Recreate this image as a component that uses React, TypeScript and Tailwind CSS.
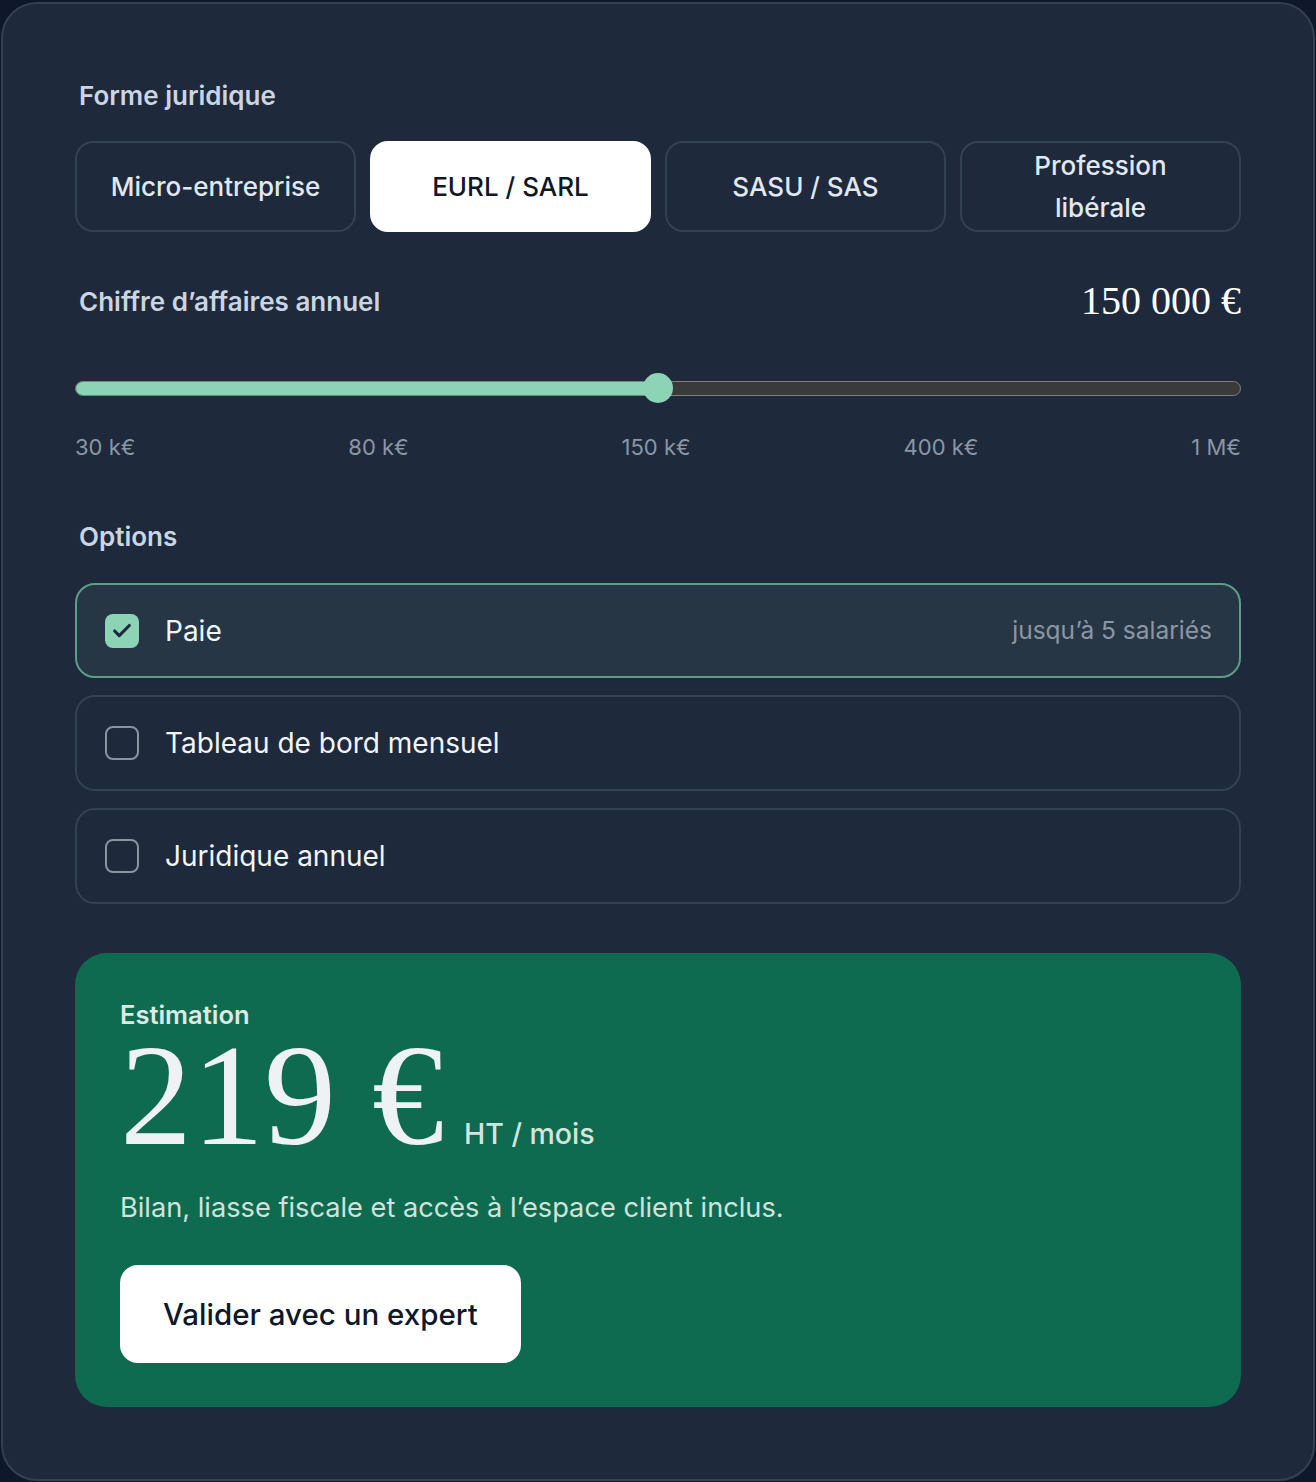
import { Check } from "lucide-react";

const formes = ["Micro-entreprise", "EURL / SARL", "SASU / SAS", "Profession libérale"];
const ticks = ["30 k€", "80 k€", "150 k€", "400 k€", "1 M€"];
const options = [
  { label: "Paie", hint: "jusqu’à 5 salariés", checked: true },
  { label: "Tableau de bord mensuel", hint: "", checked: false },
  { label: "Juridique annuel", hint: "", checked: false },
];

const sans = "font-['Inter','Liberation_Sans',sans-serif]";
const serif = "font-['Liberation_Serif','DejaVu_Serif',serif]";

export default function App() {
  const selected = 1;
  const pct = 50;

  return (
    <div className={`min-h-screen bg-[#0f172a] px-[1px] pt-[2px] ${sans}`}>
      <div className="rounded-[36px] border-2 border-[#334155] bg-[#1e293b] p-[72px]">
        {/* forme juridique */}
        <p className="pl-[4px] text-[26px] font-semibold leading-[40px] text-[#cbd5e1]">Forme juridique</p>
        <div className="mt-[25px] grid grid-cols-4 gap-[14px]">
          {formes.map((f, i) => (
            <button
              key={f}
              className={
                i === selected
                  ? "flex h-[91px] items-center justify-center rounded-[18px] border-2 border-white bg-white px-[28px] text-center text-[26px] font-medium leading-[42px] text-[#0f172a]"
                  : "flex h-[91px] items-center justify-center rounded-[18px] border-2 border-[#334155] px-[28px] text-center text-[26px] font-medium leading-[42px] text-[#e2e8f0]"
              }
            >
              {f}
            </button>
          ))}
        </div>

        {/* chiffre d'affaires */}
        <div className="mt-[45px] flex h-[48px] items-center justify-between pl-[4px]">
          <p className="text-[26px] font-semibold text-[#cbd5e1]">Chiffre d’affaires annuel</p>
          <p className={`${serif} text-[40px] text-white`}>150 000 €</p>
        </div>

        <div className="relative mt-[48px] flex h-[30px] items-center">
          <div className="relative h-[15px] w-full overflow-hidden rounded-full border-[1.5px] border-[#808080] bg-[#3a3a3a]">
            <div className="h-full bg-[#8dd3b5]" style={{ width: `${pct}%` }} />
          </div>
          <div
            className="absolute top-0 h-[30px] w-[30px] -translate-x-1/2 rounded-full bg-[#8dd3b5]"
            style={{ left: `${pct}%` }}
          />
        </div>

        <div className="mt-[29px] flex justify-between text-[22px] leading-[30px] text-[#8b96a5]">
          {ticks.map((t) => (
            <span key={t}>{t}</span>
          ))}
        </div>

        {/* options */}
        <p className="mt-[57px] pl-[4px] text-[26px] font-semibold leading-[36px] text-[#cbd5e1]">Options</p>
        <div className="mt-[28px] flex flex-col gap-[17px]">
          {options.map((o) => (
            <div
              key={o.label}
              className={
                o.checked
                  ? "flex h-[95px] items-center rounded-[20px] border-2 border-[#5b9e89] bg-[#263645] pl-[28px] pr-[27px]"
                  : "flex h-[96px] items-center rounded-[20px] border-2 border-[#334155] pl-[28px] pr-[27px]"
              }
            >
              {o.checked ? (
                <span className="flex size-[34px] items-center justify-center rounded-[8px] bg-[#8dd3b5]">
                  <Check className="size-[22px] text-[#1e293b]" strokeWidth={3.4} />
                </span>
              ) : (
                <span className="size-[34px] rounded-[8px] border-2 border-[#8a939e]" />
              )}
              <span className="ml-[26px] text-[28px] text-[#f1f5f9]">{o.label}</span>
              {o.hint && <span className="ml-auto text-[24.5px] text-[#8b96a5]">{o.hint}</span>}
            </div>
          ))}
        </div>

        {/* estimation */}
        <div className="mt-[49px] rounded-[32px] bg-[#0f6b50] px-[45px] pb-[44px] pt-[46px]">
          <p className="text-[25.5px] font-semibold leading-[32px] text-[#dce9e4]">Estimation</p>
          <div className="flex items-baseline gap-[20px]">
            <span className={`${serif} text-[144px] leading-[130px] text-[#eef2f4]`}>219 €</span>
            <span className="text-[28.5px] font-medium text-[#d6e4df]">HT / mois</span>
          </div>
          <p className="mt-[29px] text-[27.2px] leading-[36px] text-[#cfe3dc]">
            Bilan, liasse fiscale et accès à l’espace client inclus.
          </p>
          <button className="mt-[39px] h-[98px] rounded-[18px] bg-white px-[43px] text-[29.5px] font-medium text-[#0f172a]">
            Valider avec un expert
          </button>
        </div>
      </div>
    </div>
  );
}
